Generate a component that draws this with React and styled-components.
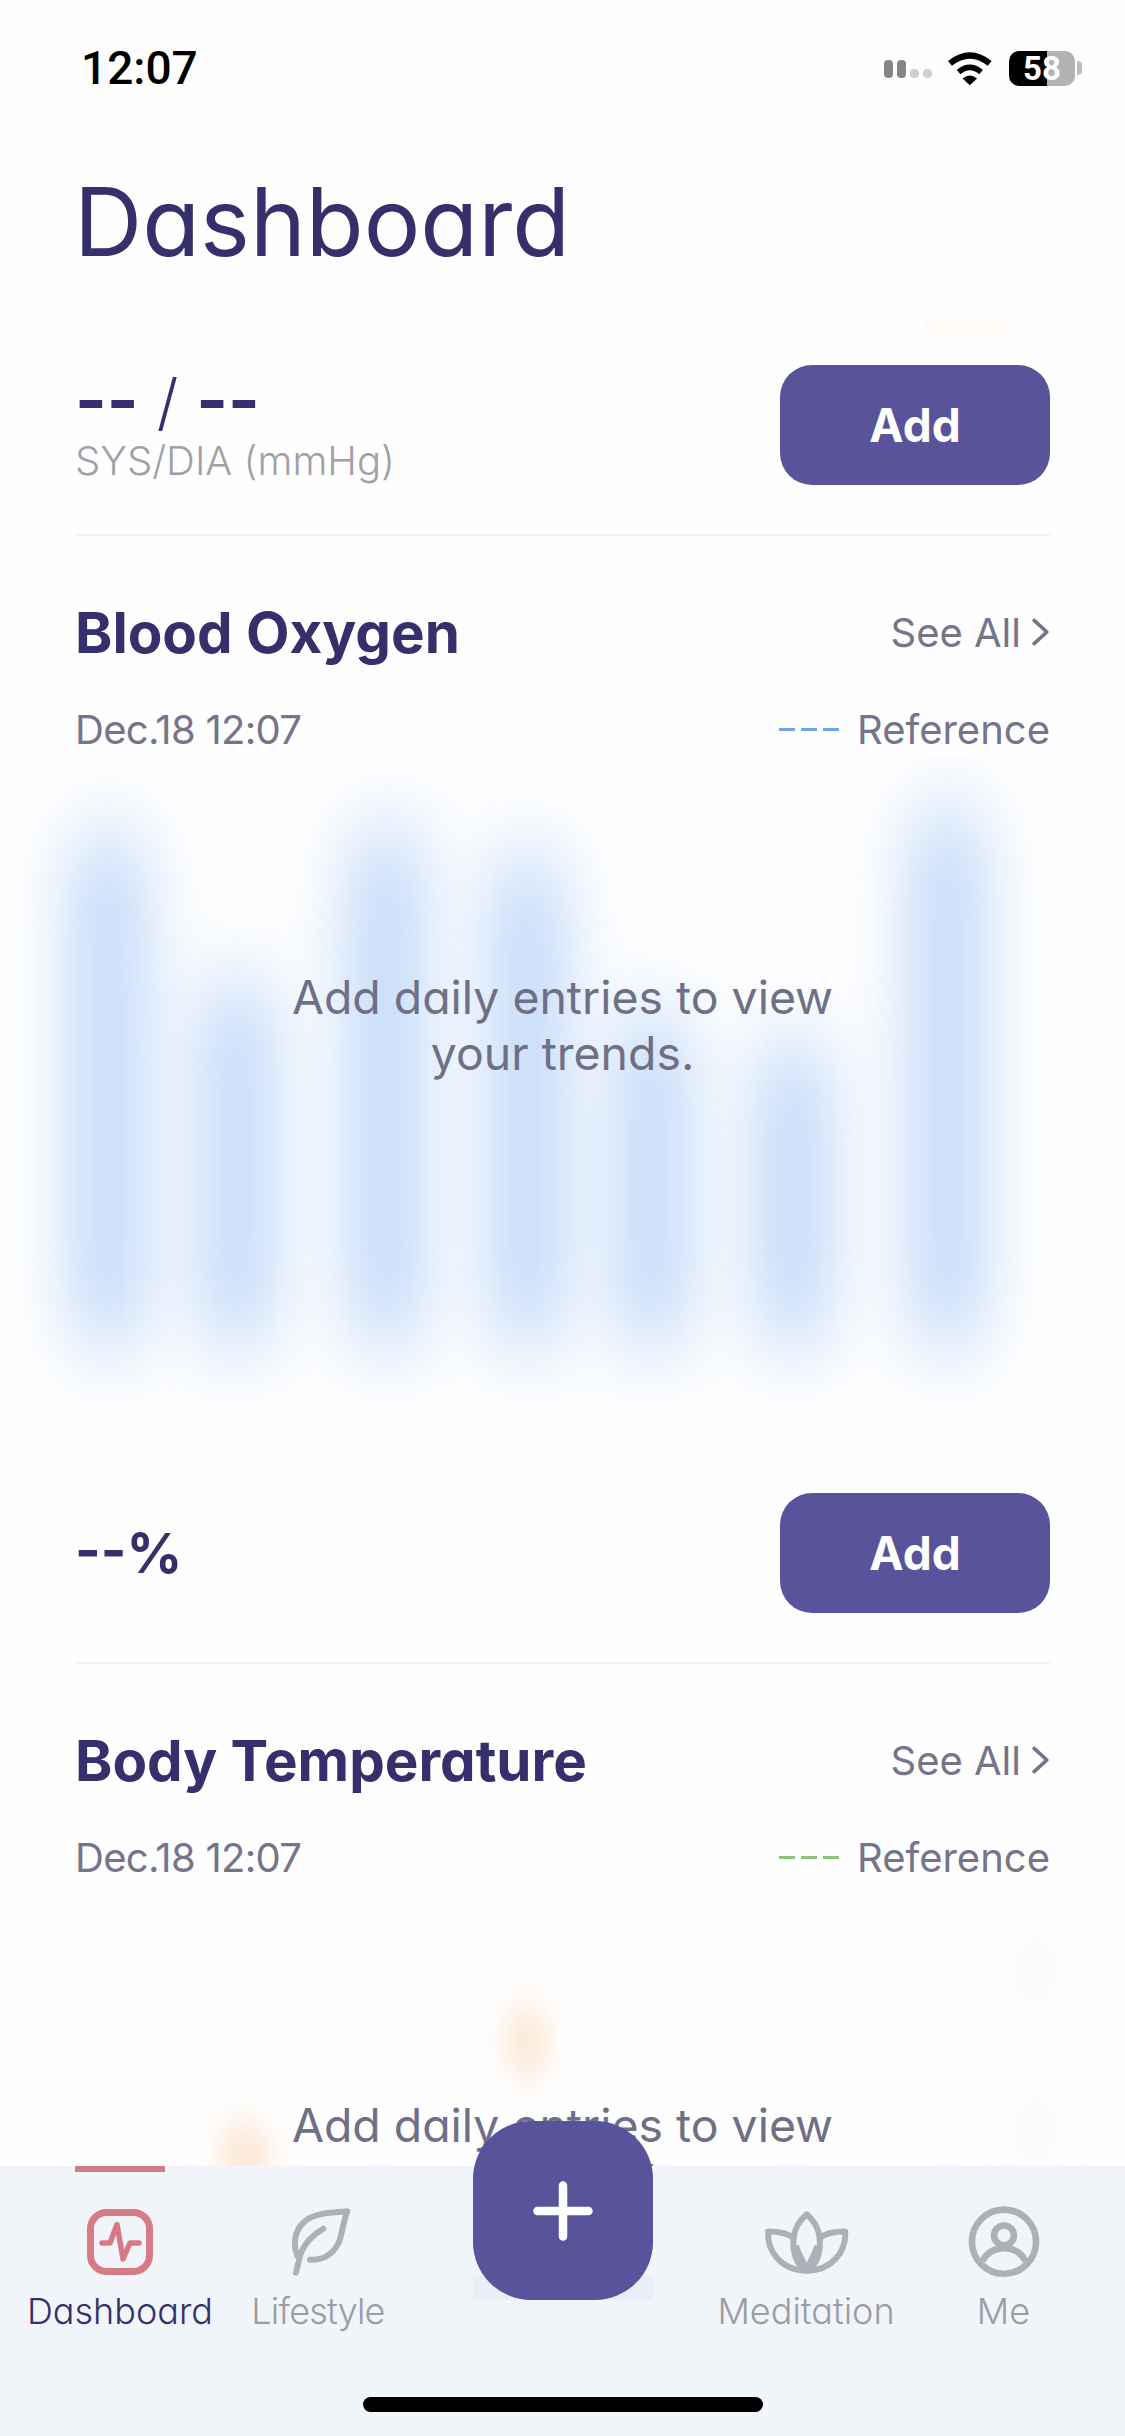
import React from 'react';
import styled, { createGlobalStyle } from 'styled-components';

const navy = '#352f6b';
const violet = '#58539b';
const muted = '#74748a';
const tabGrey = '#aeb0b8';

const GlobalStyle = createGlobalStyle`
  html, body {
    margin: 0;
    padding: 0;
    background: #fefefe;
  }
  body {
    font-family: Inter, "Liberation Sans", sans-serif;
    font-feature-settings: "cv11";
  }
`;

// --- styled components
const Screen = styled.div`
  display: flex;
  flex-direction: column;
  width: 1125px;
  height: 2436px;
  overflow: hidden;
  background: #fefefe;
`;

const StatusBar = styled.div`
  display: flex;
  align-items: center;
  justify-content: space-between;
  box-sizing: border-box;
  height: 136px;
  padding: 0 43px 0 81px;
`;

const Time = styled.span`
  font-family: Roboto, sans-serif;
  font-size: 46px;
  font-weight: 500;
  color: #000;
`;

const StatusIcons = styled.div`
  display: flex;
  align-items: center;
`;

const Signal = styled.div`
  display: flex;
  align-items: flex-end;
  gap: 4px;
  height: 18px;
  margin-right: 14px;
  padding-top: 2px;
`;

const SignalBar = styled.i`
  width: 9px;
  height: ${(p) => (p.$on ? 18 : 9)}px;
  border-radius: 4px;
  background: ${(p) => (p.$on ? '#858585' : '#d0d0d0')};
`;

const Battery = styled.div`
  display: flex;
  align-items: center;
  justify-content: center;
  width: 66px;
  height: 35px;
  margin-left: 15px;
  border-radius: 10px;
  background: linear-gradient(90deg, #000 0 38px, #b3b3b3 38px);
  font-family: Roboto, sans-serif;
  font-size: 33px;
  font-weight: 700;
  color: #fff;
`;

const BatteryCap = styled.i`
  width: 5px;
  height: 14px;
  margin-left: 2px;
  border-radius: 0 4px 4px 0;
  background: #bdbdbd;
`;

const Title = styled.h1`
  margin: 0;
  padding-left: 74px;
  height: 171px;
  font-size: 94.5px;
  font-weight: 400;
  line-height: 171px;
  color: ${navy};
`;

const Scroller = styled.main`
  flex: 1;
  min-height: 0;
  overflow: hidden;
`;

const GhostStrip = styled.div`
  display: flex;
  height: 23px;
  margin-top: 5px;
  margin-bottom: 30px;
`;

const GhostLabel = styled.i`
  width: ${(p) => p.$w}px;
  margin-left: ${(p) => p.$gap}px;
  background: ${(p) => p.$tint || '#fcfcfc'};
  filter: blur(1px);
`;

const Row = styled.div`
  display: flex;
  align-items: center;
  justify-content: space-between;
  margin: 0 75px;
  padding-bottom: 49px;
  border-bottom: 2px solid #f1f2f6;
`;

const Reading = styled.div`
  display: flex;
  flex-direction: column;
`;

const Value = styled.span`
  margin-bottom: ${(p) => (p.$large ? 5 : 0)}px;
  font-size: ${(p) => (p.$large ? 68 : 55)}px;
  font-weight: 700;
  line-height: 64px;
  color: ${navy};
`;

const Slash = styled.span`
  margin: 0 18px;
  font-size: 62px;
  font-weight: 300;
`;

const Unit = styled.span`
  font-size: 40px;
  font-weight: 300;
  line-height: 44px;
  color: #a0a0a8;
`;

const AddButton = styled.button`
  width: 270px;
  height: 120px;
  padding: 0;
  border: 0;
  border-radius: 32px;
  background: ${violet};
  font-family: inherit;
  font-feature-settings: inherit;
  font-size: 46px;
  font-weight: 700;
  color: #fff;
`;

const SectionHead = styled.div`
  display: flex;
  align-items: center;
  justify-content: space-between;
  height: 70px;
  margin: 61px 75px 0;
`;

const SectionTitle = styled.h2`
  margin: 0;
  font-size: 56.5px;
  font-weight: 700;
  color: ${navy};
`;

const SeeAll = styled.span`
  display: flex;
  align-items: center;
  gap: 10px;
  font-size: 40px;
  font-weight: 400;
  color: ${muted};
`;

const SubHead = styled.div`
  display: flex;
  align-items: center;
  justify-content: space-between;
  height: 50px;
  margin: 37px 75px 0;
  font-size: 40px;
  font-weight: 400;
  color: ${muted};
`;

const DateStamp = styled.span`
  letter-spacing: -0.7px;
`;

const Legend = styled.span`
  display: flex;
  align-items: center;
  gap: 18px;
`;

const Dashes = styled.i`
  width: 60px;
  height: 3px;
  background: repeating-linear-gradient(90deg, ${(p) => p.$color} 0 16px, transparent 16px 22px);
`;

const Chart = styled.div`
  position: relative;
  height: 739px;

  svg {
    display: block;
  }
`;

const ChartHint = styled.p`
  position: absolute;
  top: 215px;
  left: 0;
  right: 0;
  margin: 0;
  font-size: 46.4px;
  font-weight: 400;
  line-height: 56px;
  text-align: center;
  color: #6f6f85;
`;

const TabBar = styled.nav`
  position: relative;
  display: grid;
  grid-template-columns: 240px 156px 334px 152px 1fr;
  flex: none;
  height: 270px;
  background: #f1f4f9;
`;

const TabMarker = styled.i`
  position: absolute;
  top: 0;
  left: 75px;
  width: 90px;
  height: 6px;
  background: #d27a85;
`;

const Tab = styled.div`
  display: flex;
  flex-direction: column;
  align-items: center;
`;

const TabIcon = styled.div`
  display: flex;
  align-items: center;
  justify-content: center;
  height: 76px;
  margin-top: 38px;
`;

const TabLabel = styled.span`
  margin-top: 9px;
  font-size: 36px;
  font-weight: 300;
  line-height: 44px;
  letter-spacing: ${(p) => p.$spacing || 0}px;
  white-space: nowrap;
  color: ${(p) => (p.$active ? navy : '#9a9ca6')};
`;

const FabShade = styled.i`
  position: absolute;
  top: 110px;
  left: 473px;
  width: 180px;
  height: 24px;
  background: #eceef7;
`;

const Fab = styled.button`
  position: absolute;
  top: -45px;
  left: 473px;
  display: flex;
  align-items: center;
  justify-content: center;
  width: 180px;
  height: 179px;
  padding: 0;
  border: 0;
  border-radius: 58px;
  background: ${violet};
`;

const HomeIndicator = styled.i`
  position: absolute;
  bottom: 24px;
  left: 363px;
  width: 400px;
  height: 15px;
  border-radius: 8px;
  background: #000;
`;

// --- drawings
const WifiIcon = () => (
  <svg width="48" height="36" viewBox="0 0 145 108" fill="none" stroke="#000">
    <path d="M12 40 Q72 -8 132 40" strokeWidth="19" />
    <path d="M38 66 Q72 38 106 66" strokeWidth="17" />
    <path d="M50 86 Q72 68 94 86 L72 106Z" fill="#000" stroke="none" />
  </svg>
);

const Chevron = () => (
  <svg width="19" height="30" viewBox="0 0 18 28" fill="none" stroke={muted} strokeWidth="3.5" strokeLinecap="round" strokeLinejoin="round">
    <path d="M3 3 L15 14 L3 25" />
  </svg>
);

const PlusIcon = () => (
  <svg width="60" height="60" viewBox="0 0 60 60" stroke="#fff" strokeWidth="8.5" strokeLinecap="round">
    <path d="M30 4.5V55.5M4.5 30H55.5" />
  </svg>
);

const DashboardIcon = () => (
  <svg width="66" height="66" viewBox="0 0 66 66" fill="none" stroke="#d67b86" strokeLinecap="round" strokeLinejoin="round">
    <rect x="3.5" y="3.5" width="59" height="59" rx="16" strokeWidth="7" />
    <path d="M15 34 H23 L30 15.5 L36 50 L43 34 H52" strokeWidth="5.5" />
  </svg>
);

const LeafIcon = () => (
  <svg width="65" height="72" viewBox="-12 0 195 216" fill="none" stroke={tabGrey} strokeWidth="18" strokeLinecap="round" strokeLinejoin="round">
    <path d="M60 161 C110 165 140 130 150 100 C160 60 165 30 172 16 C130 18 70 20 40 50 C10 80 10 120 22 150" />
    <path d="M100 68 C70 85 40 115 30 150 L18 200" />
  </svg>
);

const LotusIcon = () => (
  <svg width="85" height="63" viewBox="0 0 255 190" fill="none" stroke={tabGrey} strokeWidth="18" strokeLinejoin="round">
    <path d="M128 10 C100 35 88 60 88 100 C88 140 110 175 128 180 C146 175 168 140 168 100 C168 60 156 35 128 10Z" />
    <path d="M88 82 C70 66 40 62 12 62 C8 120 50 180 128 180 C118 150 102 130 96 105" />
    <path d="M168 82 C186 66 216 62 244 62 C248 120 206 180 128 180 C138 150 154 130 160 105" />
  </svg>
);

const MeIcon = () => (
  <svg width="76" height="76" viewBox="0 0 230 230" fill="none" stroke={tabGrey} strokeWidth="20">
    <circle cx="115" cy="114" r="97" />
    <circle cx="115" cy="95" r="30" />
    <path d="M50 172 C65 145 90 134 115 134 C140 134 165 145 180 172" />
  </svg>
);

const oxygenBars = [
  { x: 108, top: 77 },
  { x: 237, top: 224 },
  { x: 386, top: 72 },
  { x: 527, top: 99 },
  { x: 652, top: 256 },
  { x: 793, top: 284 },
  { x: 947, top: 53 },
];

const OxygenChart = () => (
  <svg width="1125" height="739" viewBox="0 0 1125 739">
    <defs>
      <filter id="haze" x="-400%" y="-60%" width="900%" height="220%">
        <feGaussianBlur stdDeviation="36 44" />
      </filter>
    </defs>
    {oxygenBars.map((bar) => (
      <rect key={bar.x} x={bar.x - 30} y={bar.top} width="60" height={595 - bar.top} rx="30" fill="#aecdf7" filter="url(#haze)" />
    ))}
  </svg>
);

const TemperatureChart = () => (
  <svg width="1125" height="739" viewBox="0 0 1125 739">
    <defs>
      <filter id="glow" x="-200%" y="-100%" width="500%" height="300%">
        <feGaussianBlur stdDeviation="15" />
      </filter>
    </defs>
    {[108, 237, 380, 527, 660, 793, 947].map((x) => (
      <rect key={x} x={x - 10} y="50" width="20" height="600" fill="#fdfdfd" />
    ))}
    <ellipse cx="527" cy="160" rx="20" ry="38" fill="#fde6d2" filter="url(#glow)" />
    <ellipse cx="245" cy="275" rx="24" ry="38" fill="#fde6d2" filter="url(#glow)" />
    <ellipse cx="1035" cy="87" rx="18" ry="36" fill="#f9f8f7" filter="url(#glow)" />
    <ellipse cx="1035" cy="247" rx="18" ry="36" fill="#f9f8f7" filter="url(#glow)" />
  </svg>
);

// --- components
const ghostLabels = [
  { w: 80, gap: 63 },
  { w: 94, gap: 50 },
  { w: 95, gap: 65 },
  { w: 94, gap: 49 },
  { w: 72, gap: 50 },
  { w: 40, gap: 88 },
  { w: 80, gap: 85, tint: '#fefbf8' },
];

const tabs = [
  { label: 'Dashboard', icon: <DashboardIcon />, active: true },
  { label: 'Lifestyle', icon: <LeafIcon />, spacing: -0.8 },
  null,
  { label: 'Meditation', icon: <LotusIcon /> },
  { label: 'Me', icon: <MeIcon /> },
];

const Metric = ({ large, children, unit }) => (
  <Row>
    <Reading>
      <Value $large={large}>{children}</Value>
      {unit && <Unit>{unit}</Unit>}
    </Reading>
    <AddButton>Add</AddButton>
  </Row>
);

const Section = ({ title, color, children }) => (
  <>
    <SectionHead>
      <SectionTitle>{title}</SectionTitle>
      <SeeAll>
        See All <Chevron />
      </SeeAll>
    </SectionHead>
    <SubHead>
      <DateStamp>Dec.18 12:07</DateStamp>
      <Legend>
        <Dashes $color={color} />
        Reference
      </Legend>
    </SubHead>
    <Chart>
      {children}
      <ChartHint>
        Add daily entries to view
        <br />
        your trends.
      </ChartHint>
    </Chart>
  </>
);

const App = () => (
  <Screen>
    <GlobalStyle />
    <StatusBar>
      <Time>12:07</Time>
      <StatusIcons>
        <Signal>
          <SignalBar $on />
          <SignalBar $on />
          <SignalBar />
          <SignalBar />
        </Signal>
        <WifiIcon />
        <Battery>58</Battery>
        <BatteryCap />
      </StatusIcons>
    </StatusBar>
    <Title>Dashboard</Title>
    <Scroller>
      <GhostStrip>
        {ghostLabels.map((label) => (
          <GhostLabel key={label.gap + label.w} $w={label.w} $gap={label.gap} $tint={label.tint} />
        ))}
      </GhostStrip>
      <Metric large unit="SYS/DIA (mmHg)">
        --<Slash>/</Slash>--
      </Metric>
      <Section title="Blood Oxygen" color="#6fa3ee">
        <OxygenChart />
      </Section>
      <Metric>--%</Metric>
      <Section title="Body Temperature" color="#8cc47a">
        <TemperatureChart />
      </Section>
    </Scroller>
    <TabBar>
      <TabMarker />
      {tabs.map((tab, i) =>
        tab ? (
          <Tab key={tab.label}>
            <TabIcon>{tab.icon}</TabIcon>
            <TabLabel $active={tab.active} $spacing={tab.spacing}>{tab.label}</TabLabel>
          </Tab>
        ) : (
          <span key={i} />
        )
      )}
      <FabShade />
      <Fab>
        <PlusIcon />
      </Fab>
      <HomeIndicator />
    </TabBar>
  </Screen>
);

export default App;
